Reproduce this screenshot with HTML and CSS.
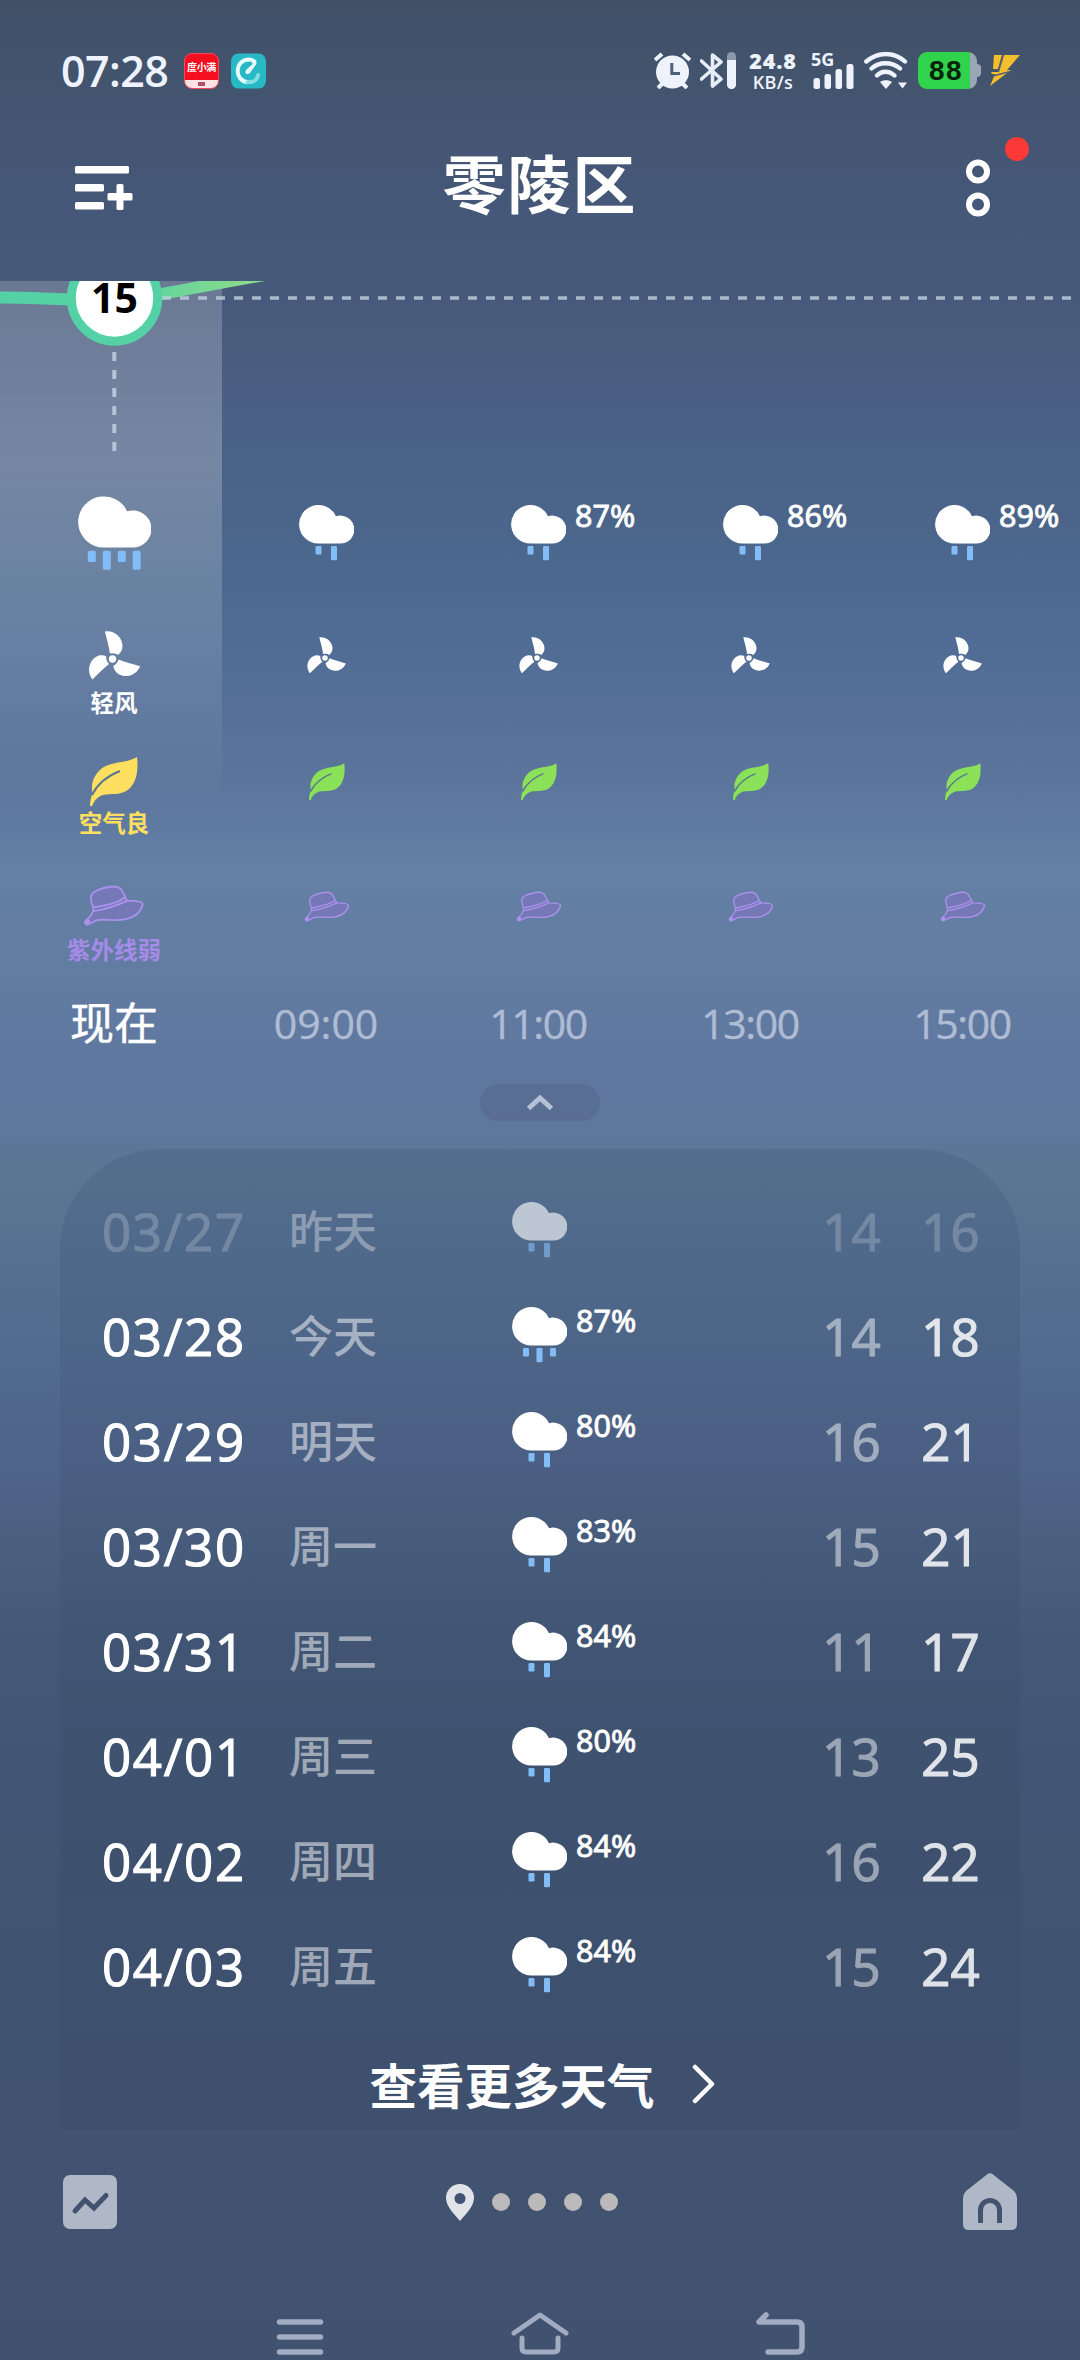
FILE: index.html
```html
<!DOCTYPE html>
<html lang="zh-CN">
<head>
<meta charset="utf-8">
<title>零陵区</title>
<link rel="stylesheet" href="styles.css">
</head>
<body>
<svg class="defs" aria-hidden="true">
  <symbol id="cloud" viewBox="0 0 55 39"><path fill="#fff" d="M19.3 38.6A19.3 19.3 0 1 1 37 11.3A14 14 0 1 1 41 38.6Z"/></symbol>
  <symbol id="rain2" viewBox="0 0 55 56"><use href="#cloud" width="55" height="39"/><g fill="#83bdf8"><rect x="16.5" y="41" width="6" height="8.5" rx="1.2"/><rect x="32" y="41" width="6" height="14.3" rx="1.2"/></g></symbol>
  <symbol id="rain3" viewBox="0 0 55 56"><use href="#cloud" width="55" height="39"/><g fill="#83bdf8"><rect x="11" y="41" width="6" height="8.5" rx="1.2"/><rect x="24.5" y="41" width="6" height="14.3" rx="1.2"/><rect x="38" y="41" width="6" height="8.5" rx="1.2"/></g></symbol>
  <symbol id="rain4" viewBox="0 0 55 56"><use href="#cloud" width="55" height="39"/><g fill="#83bdf8"><rect x="7.4" y="41" width="6" height="8.5" rx="1.2"/><rect x="18.7" y="41" width="6" height="14.3" rx="1.2"/><rect x="30" y="41" width="6" height="8.5" rx="1.2"/><rect x="41.2" y="41" width="6" height="14.3" rx="1.2"/></g></symbol>
  <symbol id="fan" viewBox="-24 -29 52 50"><g fill="#fff"><circle r="3.7"/><path id="blade" d="M-7.6-27.6C2.500-29 10-21 10-13C10-9 8-6 5.500-4C3.800-5.500.8-6.300-2.600-5.500C-3.500-13-6-21-7.600-27.600Z"/><use href="#blade" transform="rotate(120)"/><use href="#blade" transform="rotate(240)"/></g></symbol>
  <symbol id="leaf" viewBox="0 0 48 49"><path fill="currentColor" d="M47 0C36 7 22 3.500 11 12C4 18 .5 27 2.500 36C1 40 0 45 0 49H2.200C4 44 7 40 13 38C21 36 31 39 39 32C47 25 48.500 12 47 0Z"/><path fill="none" stroke="#5b7593" stroke-width="1.900" d="M30 14C17 19 7 28 2 38"/></symbol>
  <symbol id="hat" viewBox="-1 -1 63 42"><g fill="#9070d0" fill-opacity=".42" stroke="#aa91ec" stroke-width="1.900" stroke-linejoin="round"><path d="M9 26L9.300 22C6 14 5 8 12.700 4.700C18 2.500 24 .5 31 .5C36 .5 38 3 42 11.500L44 15C55 15 60 16 60 19C58 27 52 32 43 34C30 36.500 22 33.500 13 35L4 39.500C0 40 0 36 3 34.500C7 31 8 29 9 26Z"/><path fill="none" d="M9.300 22C21 20 34 18 42 11.500M9 26C21 24 34 20 44 15"/></g><circle cx="3.500" cy="37" r="2.800" fill="#aa91ec"/></symbol>
</svg>

<div class="screen">
  <header class="status">
    <span class="clock">07:28</span>
    <span class="app app-red"><b>度小满</b><i></i></span>
    <svg class="app" viewBox="0 0 36 36"><rect width="36" height="36" rx="7" fill="#28b9c6"/><path d="M24 8C18 4 10 7 7.500 14C5 23 11 29 17 29.500" fill="none" stroke="#e9fcfb" stroke-width="4" stroke-linecap="round"/><path d="M17 29.500C23 30 27 27 28 22" fill="none" stroke="#7fe0df" stroke-width="4" stroke-linecap="round"/><path fill="#e9fcfb" d="M22 6Q27 6 26 11L19.500 20Q17 22 15.500 20.500Q14 19 16 16.500L22 11Z"/></svg>
    <div class="status-right">
      <svg width="37" height="37" viewBox="0 0 37 37"><g stroke="#eef3fb" stroke-width="4" stroke-linecap="butt"><path d="M1 8L8 2M36 8L29 2M4 36L9 31M33 36L28 31"/></g><circle cx="18.500" cy="20" r="16.500" fill="#eef3fb"/><path d="M17.800 11V21.500H26" fill="none" stroke="#506079" stroke-width="3"/></svg>
      <svg class="bt" width="37" height="37" viewBox="0 0 37 37"><path d="M1.500 9L21 27L12.500 34V3L21 10L1.500 27" fill="none" stroke="#e6edf8" stroke-width="3.600" stroke-linejoin="round" stroke-linecap="round"/><rect x="27" y="0" width="9" height="37" rx="4.500" fill="#8f99ae"/><path d="M27 8H36V32.500A4.500 4.500 0 0 1 27 32.500Z" fill="#eef3fb"/></svg>
      <span class="speed"><b>24.8</b><small>KB/s</small></span>
      <span class="signal"><b>5G</b><svg width="42" height="37" viewBox="0 0 42 37"><g fill="#eef3fb"><rect x="1.500" y="26" width="6.500" height="11" rx="2.500"/><rect x="12.500" y="22" width="6.500" height="15" rx="2.500"/><rect x="23.500" y="17" width="6.500" height="20" rx="2.500"/><rect x="34.500" y="12" width="7" height="25" rx="2.500"/></g></svg></span>
      <svg class="wifi" width="45" height="37" viewBox="0 0 45 37"><g fill="none" stroke="#eef3fb" stroke-width="4.300" stroke-linecap="round"><path d="M2.300 9.500C14-.5 30-.5 41 9.500M7.500 16.500C15 9.500 28 9.500 36 16.500M13 23.500C18 18.500 25 18.500 30.500 23.500"/></g><path fill="#eef3fb" d="M16 30C19 27.500 25 27.500 28 30L22 37ZM34 30.500H43L38.500 36.500Z"/></svg>
      <span class="battery"><b>88</b></span>
      <svg class="bolt" width="30" height="31" viewBox="0 0 30 31"><path fill="#f5be2c" d="M4 0H12L8 14H3ZM14 0H30L17 15H21L0 31L5 19H2L1 17H9Z"/><path d="M13 0L8 17M22 16L3 21" stroke="#526078" stroke-width="1.500"/></svg>
    </div>
  </header>

  <div class="titlebar">
    <svg width="58" height="46" viewBox="0 0 58 46"><g fill="#fff"><rect y="1" width="54" height="7.500" rx="1.500"/><rect y="19" width="29" height="7.500" rx="1.500"/><rect y="37" width="29" height="7.500" rx="1.500"/><rect x="32.500" y="28" width="25" height="7.500" rx="1.500"/><rect x="41.500" y="19" width="7" height="26" rx="1.500"/></g></svg>
    <h1>零陵区</h1>
    <svg class="more" width="50" height="80" viewBox="0 0 50 80"><g fill="none" stroke="#fff" stroke-width="6"><circle cx="11" cy="34.500" r="9"/><circle cx="11" cy="67.500" r="9"/></g><circle cx="50" cy="12" r="12" fill="#fb3a38"/></svg>
  </div>

  <section class="hourly">
    <svg class="curve" width="1080" height="189" viewBox="0 281 1080 189">
      <defs><linearGradient id="temp" gradientUnits="userSpaceOnUse" x1="120" y1="0" x2="265" y2="0"><stop offset="0" stop-color="#55d1a6"/><stop offset="1" stop-color="#92dc87"/></linearGradient></defs>
      <path d="M0 297.500C35 297.500 60 300 114 300C150 298 190 288 270 274" fill="none" stroke="url(#temp)" stroke-width="12"/>
      <path d="M162 298H1072" stroke="#c3cfe0" stroke-opacity=".8" stroke-width="3.500" stroke-dasharray="9 9"/>
      <path d="M114.300 352V452" stroke="#c3cfe0" stroke-opacity=".85" stroke-width="4" stroke-dasharray="9 9"/>
      <circle cx="114.500" cy="298" r="43.200" fill="#fff" stroke="#55d1a6" stroke-width="9"/>
      <text x="114.500" y="312.500" text-anchor="middle" class="now-temp">15</text>
    </svg>
    <div class="hours sky">
      <div><svg class="big"><use href="#rain4"/></svg></div>
      <div><svg><use href="#rain2"/></svg></div>
      <div><svg><use href="#rain2"/></svg><span class="pct">87%</span></div>
      <div><svg><use href="#rain2"/></svg><span class="pct">86%</span></div>
      <div><svg><use href="#rain2"/></svg><span class="pct">89%</span></div>
    </div>
    <div class="hours wind">
      <div><svg class="big"><use href="#fan"/></svg><b>轻风</b></div>
      <div><svg><use href="#fan"/></svg></div>
      <div><svg><use href="#fan"/></svg></div>
      <div><svg><use href="#fan"/></svg></div>
      <div><svg><use href="#fan"/></svg></div>
    </div>
    <div class="hours air">
      <div><svg class="big"><use href="#leaf"/></svg><b>空气良</b></div>
      <div><svg><use href="#leaf"/></svg></div>
      <div><svg><use href="#leaf"/></svg></div>
      <div><svg><use href="#leaf"/></svg></div>
      <div><svg><use href="#leaf"/></svg></div>
    </div>
    <div class="hours uv">
      <div><svg class="big"><use href="#hat"/></svg><b>紫外线弱</b></div>
      <div><svg><use href="#hat"/></svg></div>
      <div><svg><use href="#hat"/></svg></div>
      <div><svg><use href="#hat"/></svg></div>
      <div><svg><use href="#hat"/></svg></div>
    </div>
    <div class="hours times">
      <div>现在</div><div>09:00</div><div class="tight">11:00</div><div class="tight">13:00</div><div class="tight">15:00</div>
    </div>
  </section>

  <button class="collapse" aria-label="收起"><svg width="28" height="16" viewBox="0 0 28 16"><path d="M2.500 13.500L14 3L25.500 13.500" fill="none" stroke="#b4c0d5" stroke-width="5"/></svg></button>

  <section class="daily">
    <div class="day past"><span class="date">03/27</span><span class="name">昨天</span><span class="cond"><svg><use href="#rain2"/></svg></span><span class="low">14</span><span class="high">16</span></div>
    <div class="day"><span class="date">03/28</span><span class="name">今天</span><span class="cond"><svg><use href="#rain3"/></svg><span class="pct">87%</span></span><span class="low">14</span><span class="high">18</span></div>
    <div class="day"><span class="date">03/29</span><span class="name">明天</span><span class="cond"><svg><use href="#rain2"/></svg><span class="pct">80%</span></span><span class="low">16</span><span class="high">21</span></div>
    <div class="day"><span class="date">03/30</span><span class="name">周一</span><span class="cond"><svg><use href="#rain2"/></svg><span class="pct">83%</span></span><span class="low">15</span><span class="high">21</span></div>
    <div class="day"><span class="date">03/31</span><span class="name">周二</span><span class="cond"><svg><use href="#rain2"/></svg><span class="pct">84%</span></span><span class="low">11</span><span class="high">17</span></div>
    <div class="day"><span class="date">04/01</span><span class="name">周三</span><span class="cond"><svg><use href="#rain2"/></svg><span class="pct">80%</span></span><span class="low">13</span><span class="high">25</span></div>
    <div class="day"><span class="date">04/02</span><span class="name">周四</span><span class="cond"><svg><use href="#rain2"/></svg><span class="pct">84%</span></span><span class="low">16</span><span class="high">22</span></div>
    <div class="day"><span class="date">04/03</span><span class="name">周五</span><span class="cond"><svg><use href="#rain2"/></svg><span class="pct">84%</span></span><span class="low">15</span><span class="high">24</span></div>
    <a class="all">查看更多天气<svg width="24" height="40" viewBox="0 0 24 40"><path d="M3 3L20 20L3 37" fill="none" stroke="#fff" stroke-width="4.500" stroke-linecap="round" stroke-linejoin="round"/></svg></a>
  </section>

  <footer class="pager">
    <svg width="54" height="56" viewBox="0 0 54 56"><rect y="1" width="54" height="54" rx="7" fill="#b0b8c8"/><path d="M12 37L22 26L31 34L43 21.500" fill="none" stroke="#42526f" stroke-width="5" stroke-linecap="round"/></svg>
    <div class="dots"><svg width="28" height="37" viewBox="0 0 28 37"><path fill="#e0e3e8" fill-rule="evenodd" d="M14 0A14 14 0 0 1 28 14C28 22 20 30 14 37C8 30 0 22 0 14A14 14 0 0 1 14 0ZM14 9A5.500 5.500 0 1 0 14 20A5.500 5.500 0 1 0 14 9Z"/></svg><i></i><i></i><i></i><i></i></div>
    <svg width="54" height="58" viewBox="0 0 54 58"><path fill="#b0b8c8" d="M24 1.500Q27-1 30 1.500L51 18Q54 21 54 25V51Q54 57 48 57H6Q0 57 0 51V25Q0 21 3 18Z"/><path d="M17.500 50V37A9.500 9.500 0 0 1 36.500 37V50" fill="none" stroke="#42526f" stroke-width="5"/></svg>
  </footer>

  <nav class="system">
    <svg width="58" height="46" viewBox="0 0 58 46"><path d="M8.500 12H49.500M8.500 27H49.500M8.500 42H49.500" stroke="#a1acc2" stroke-width="5.500" stroke-linecap="round"/></svg>
    <svg width="58" height="46" viewBox="0 0 58 46"><path d="M3 23L29 5L55 23M11 28V38Q11 42 15 42H43Q47 42 47 38V28" fill="none" stroke="#a1acc2" stroke-width="5" stroke-linecap="round" stroke-linejoin="round"/></svg>
    <svg width="58" height="46" viewBox="0 0 58 46"><path d="M15 5L8 12H46Q51 12 51 17V37Q51 42 46 42H17" fill="none" stroke="#a1acc2" stroke-width="5.500" stroke-linecap="round" stroke-linejoin="round"/></svg>
  </nav>
</div>
</body>
</html>
```
FILE: styles.css
```css
* { box-sizing: border-box; }
body { margin: 0; }
.defs { position: absolute; width: 0; height: 0; }

.screen {
  width: 1080px;
  height: 2360px;
  overflow: hidden;
  display: flex;
  flex-direction: column;
  color: #fff;
  font-family: "Open Sans", "Noto Sans CJK SC", sans-serif;
  font-weight: 500;
  background: linear-gradient(#415067 0, #435570 110px, #465879 220px, #485a7b 300px, #4a6085 420px, #4b658a 520px, #4c6a91 590px, #536e97 680px, #5b759c 780px, #6480a5 870px, #627ba1 980px, #5f779f 1090px, #5c7696 1170px, #567091 1260px, #51698d 1380px, #4e6388 1480px, #4a5e7e 1560px, #445877 1640px, #415674 1760px, #405572 1880px, #405370 2060px, #425372 2160px, #415170 2360px);
}

/* status bar */
.status {
  flex: none;
  height: 141px;
  display: flex;
  align-items: center;
  padding: 0 60px 0 61px;
}
.clock { width: 123px; font-size: 43px; line-height: 50px; font-weight: 600; letter-spacing: -.6px; color: #eef3ff; }
.app { width: 35px; height: 36px; margin-right: 12px; border-radius: 8px; overflow: hidden; }
.app-red { display: flex; flex-direction: column; justify-content: space-between; align-items: center; background: #f30f20; border: 1px solid #f4475a; }
.app-red b { font-size: 10px; line-height: 26px; letter-spacing: -.4px; white-space: nowrap; }
.app-red i { width: 100%; height: 9px; background: linear-gradient(#b0506a, #b0506a) center / 7px 4px no-repeat #fde3e6; }
.status-right { margin-left: auto; display: flex; align-items: center; color: #eef3fb; }
.bt { margin-left: 9px; }
.speed { margin-left: 11px; width: 50px; display: flex; flex-direction: column; align-items: center; font-weight: 700; }
.speed b { font-size: 21.500px; line-height: 20px; letter-spacing: .9px; }
.speed small { margin-top: 2px; font-size: 18px; line-height: 18px; font-weight: 600; letter-spacing: .3px; }
.signal { position: relative; margin-left: 14px; height: 37px; display: flex; }
.signal b { position: absolute; left: -1px; top: -3px; font-size: 18px; line-height: 20px; }
.wifi { margin-left: 10px; }
.battery {
  position: relative;
  margin-left: 9px;
  width: 59px;
  height: 37px;
  border-radius: 9px;
  background: linear-gradient(90deg, #2fd44c 52px, #9aa5b5 52px);
  color: #06240b;
  display: flex;
  align-items: center;
  padding-left: 11px;
}
.battery::after { content: ""; position: absolute; left: 59px; top: 12px; width: 4px; height: 13px; border-radius: 0 4px 4px 0; background: #9aa5b5; }
.battery b { font: 700 28px/37px "Liberation Sans", sans-serif; letter-spacing: 1.500px; }
.bolt { margin-left: 13px; }

/* title bar */
.titlebar {
  flex: none;
  height: 140px;
  display: flex;
  justify-content: space-between;
  align-items: flex-start;
  padding: 0 63px 0 75px;
}
.titlebar > svg { margin-top: 24px; overflow: visible; }
.titlebar h1 { margin: 2px 0 0; padding-right: 20px; font-size: 63px; line-height: 82px; font-weight: 700; letter-spacing: 1.800px; }
.titlebar .more { margin-top: -4px; }

/* hourly forecast */
.hourly {
  flex: none;
  height: 791px;
  background: linear-gradient(rgba(255, 255, 255, .19), rgba(255, 255, 255, .24) 180px, rgba(255, 255, 255, .15) 340px, rgba(255, 255, 255, 0) 520px) 0 0 / 222px 520px no-repeat;
}
.curve { display: block; }
.now-temp { font: 700 41px "Open Sans", sans-serif; fill: #000; }
.hours { display: grid; grid-template-columns: 220px repeat(4, 212px); }
.hours > div { position: relative; display: flex; flex-direction: column; align-items: center; }
.hours > div:first-child { padding-left: 8px; }
.hours b { font-size: 23.500px; line-height: 30px; font-weight: 700; }
.hours svg { flex: none; }
.pct { font-size: 30.500px; line-height: 36px; font-weight: 400; -webkit-text-stroke: 1px #fff; }

.sky { height: 125px; }
.sky svg { width: 55px; height: 56px; margin-top: 35px; margin-left: 1px; }
.sky svg.big { width: 73px; height: 75px; margin-top: 26px; }
.sky .pct { position: absolute; left: 143px; top: 21px; line-height: 48px; }

.wind { height: 127px; }
.wind svg { width: 39px; height: 38px; margin: 41px 0 0; }
.wind svg.big { width: 53px; height: 50px; margin: 35px 0 8px; }

.air { height: 126px; color: #8be158; }
.air svg { width: 36px; height: 37px; margin: 41px 0 0 1px; }
.air svg.big { width: 48px; height: 49px; margin: 35px 0 2px; }
.air > div:first-child { color: #ffdf60; }

.uv { height: 128px; color: #a58be8; }
.uv svg { width: 46px; height: 31px; margin: 43px 0 0 1px; }
.uv svg.big { width: 62px; height: 41px; margin: 37px 0 9px; }

.times { font-size: 41px; line-height: 94px; font-weight: 400; color: #afbcd3; -webkit-text-stroke: .4px #afbcd3; }
.times > div:first-child { font-size: 44px; color: #fff; -webkit-text-stroke-color: #fff; }
.times .tight { letter-spacing: -1.400px; }

.collapse {
  flex: none;
  align-self: center;
  width: 120px;
  height: 37px;
  margin: 12px 0 28px;
  padding: 0;
  border: 0;
  border-radius: 19px;
  background: rgba(75, 95, 125, .34);
  display: flex;
  align-items: center;
  justify-content: center;
}

/* daily forecast */
.daily {
  flex: none;
  height: 981px;
  margin: 0 60px;
  padding: 29px 20px 0 42px;
  border-radius: 100px 100px 6px 6px;
  background: linear-gradient(rgba(50, 75, 110, .2), rgba(55, 75, 105, .18) 300px, rgba(50, 66, 95, .2) 700px, rgba(50, 66, 95, .16));
}
.day { height: 105px; display: grid; grid-template-columns: 187px 223px 1fr 99px 99px; align-items: center; font-size: 51px; line-height: 60px; }
.date { letter-spacing: 1.700px; -webkit-text-stroke: 1.200px #fff; }
.name { font-size: 44px; color: rgba(255, 255, 255, .5); }
.cond { position: relative; display: flex; margin-top: -1px; }
.cond svg { width: 55px; height: 56px; }
.cond .pct { position: absolute; left: 64px; top: -5px; }
.low, .high { text-align: center; -webkit-text-stroke: 1.200px #fff; }
.low { opacity: .48; }
.high { opacity: .84; }
.past .date, .past .low, .past .high { opacity: .2; }
.past .name { color: rgba(255, 255, 255, .34); }
.past .cond { opacity: .62; }
.all { display: flex; justify-content: center; align-items: center; height: 131px; padding-right: 20px; gap: 37px; font-size: 47.500px; font-weight: 700; margin-left: 3px; }

/* city pager */
.pager { flex: none; height: 144px; padding: 0 63px; display: flex; justify-content: space-between; align-items: center; }
.dots { display: flex; align-items: center; gap: 18px; padding-right: 17px; }
.dots i { width: 18px; height: 18px; border-radius: 50%; background: #bcb9bb; }

.system { flex: none; height: 86px; padding-top: 36px; display: flex; justify-content: center; gap: 182px; }
```
